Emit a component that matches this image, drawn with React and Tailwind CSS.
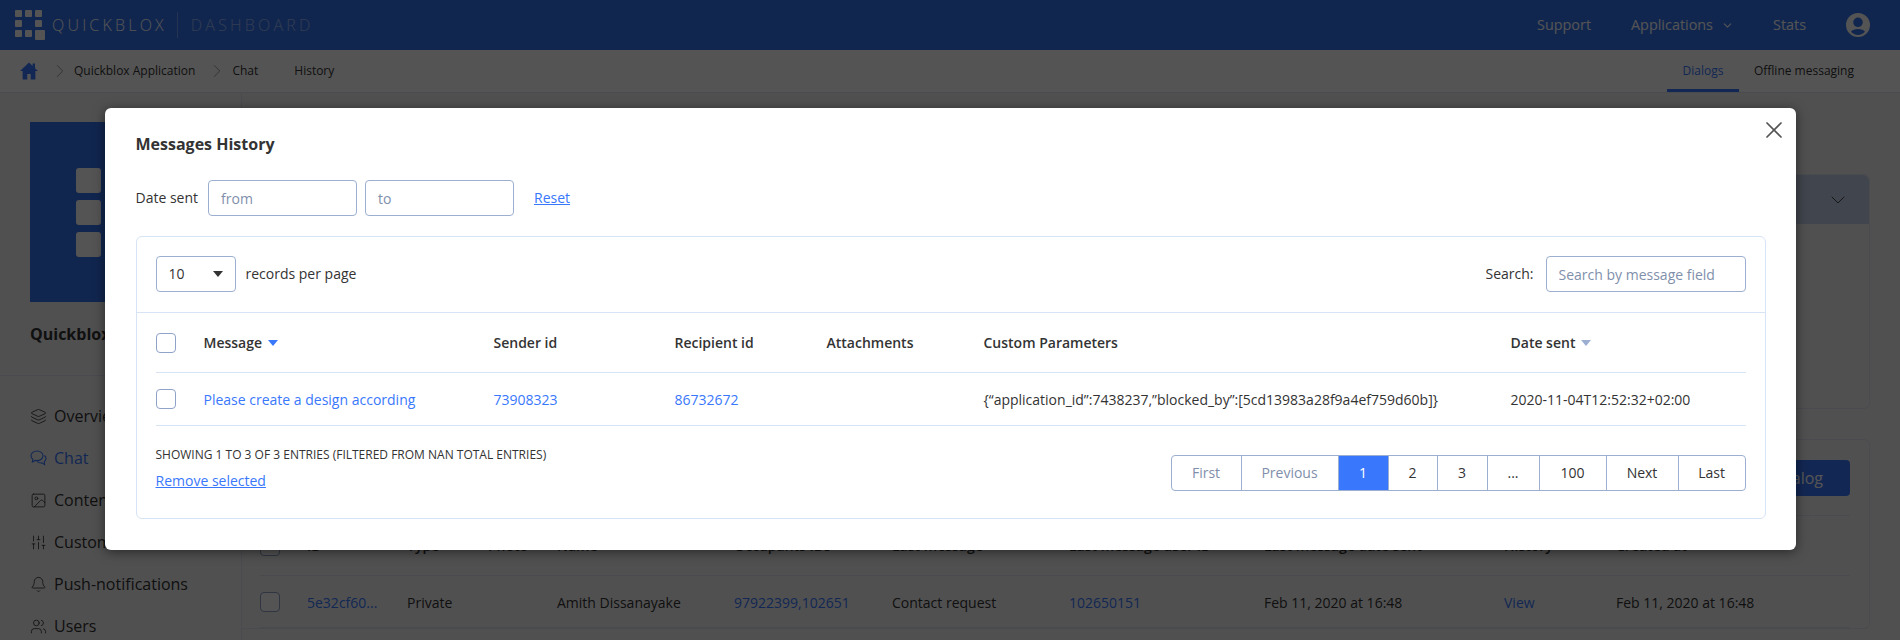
import React from 'react';
import { Layers, Image, SlidersVertical, Bell, Users, ChevronDown, ChevronRight, X } from 'lucide-react';

const SideItem = ({ icon, label, active }) => (
  <div className={`flex h-[42px] items-center gap-[7px] pl-[30px] text-base ${active ? 'text-[#3978fc]' : 'text-[#333333]'}`}>
    {icon}
    <span>{label}</span>
  </div>
);

const Caret = ({ className }) => (
  <svg width="10" height="6" viewBox="0 0 10 6" className={className}>
    <path d="M0 0h10L5 6z" fill="currentColor" />
  </svg>
);

const Checkbox = () => (
  <div className="h-5 w-5 rounded border border-[#8ea3c7] bg-white"></div>
);

const pages = [
  { label: 'First', w: 'w-[69px]', c: 'text-[#7f8fab]' },
  { label: 'Previous', w: 'w-[97px]', c: 'text-[#7f8fab]' },
  { label: '1', w: 'w-[50px]', c: 'bg-[#3978fc] text-white' },
  { label: '2', w: 'w-[49px]', c: 'text-[#333333]' },
  { label: '3', w: 'w-[50px]', c: 'text-[#333333]' },
  { label: '...', w: 'w-[52px]', c: 'text-[#333333]' },
  { label: '100', w: 'w-[67px]', c: 'text-[#333333]' },
  { label: 'Next', w: 'w-[72px]', c: 'text-[#333333]' },
  { label: 'Last', w: 'w-[67px]', c: 'text-[#333333]' },
];

const App = () => {
  return (
    <div className="relative h-[640px] w-full overflow-hidden bg-[#f2f3f4] font-['Open_Sans',sans-serif] text-sm text-[#333333]">
      {/* Header */}
      <header className="flex h-[50px] items-center justify-between bg-[#3474f0] pl-[15px] pr-[30px] text-white">
        <div className="flex items-center">
          <svg width="30" height="30" viewBox="0 0 30 30" className="text-white">
            <g fill="currentColor">
              <rect x="0" y="0" width="7" height="7" rx="1" />
              <rect x="10" y="0" width="7" height="7" rx="1" />
              <rect x="20" y="0" width="7" height="7" rx="1" />
              <rect x="0" y="10" width="7" height="7" rx="1" />
              <rect x="20" y="10" width="7" height="7" rx="1" />
              <rect x="0" y="20" width="7" height="7" rx="1" />
              <rect x="10" y="20" width="7" height="7" rx="1" />
              <rect x="20" y="20" width="10" height="10" rx="1" />
            </g>
          </svg>
          <span className="ml-[7px] text-base font-light tracking-[3.2px]">QUICKBLOX</span>
          <span className="ml-[10px] h-[26px] w-px bg-white/30"></span>
          <span className="ml-[13px] text-base font-light tracking-[3.2px] text-white/50">DASHBOARD</span>
        </div>
        <div className="flex items-center text-[14.4px]">
          <span>Support</span>
          <span className="ml-[40px]">Applications</span>
          <ChevronDown size={13} className="ml-[8px]" />
          <span className="ml-[39px]">Stats</span>
          <svg width="24" height="24" viewBox="0 0 24 24" className="ml-[40px]">
            <path fill="currentColor" fillRule="evenodd" d="M12 0a12 12 0 1 1 0 24a12 12 0 0 1 0-24zM12 4.500a4.800 4.800 0 1 0 0 9.600a4.800 4.800 0 0 0 0-9.600zM12 16c-3.200 0-5.800 1-7 2.800c1.700 2 4.200 3.200 7 3.200s5.300-1.200 7-3.200c-1.200-1.800-3.800-2.800-7-2.800z" />
          </svg>
        </div>
      </header>

      {/* Breadcrumbs */}
      <div className="flex h-[43px] items-center justify-between border-b border-[#dde2ec] bg-white pl-5 text-xs">
        <div className="flex items-center">
          <svg width="18" height="18" viewBox="0 0 18 18" className="text-[#3978fc]">
            <path fill="currentColor" d="M9 0.500L0 9h2.600v8.500h4.700v-5.500h3.400v5.500h4.700V9H18l-3-2.800V1.500h-2.400v2.400z" />
          </svg>
          <ChevronRight size={22} strokeWidth={0.8} className="ml-[11px] text-[#777777]" />
          <span className="ml-[3px]">Quickblox Application</span>
          <ChevronRight size={22} strokeWidth={0.8} className="ml-[11px] text-[#777777]" />
          <span className="ml-[4px]">Chat</span>
          <span className="ml-[36px]">History</span>
        </div>
        <div className="flex h-full items-center">
          <div className="flex h-full w-[72px] items-center justify-center border-b-[3px] border-[#3978fc] pt-[3px] text-[#3978fc]">Dialogs</div>
          <span className="ml-[15px] mr-[46px]">Offline messaging</span>
        </div>
      </div>

      {/* Page behind the modal */}
      <div className="flex">
        <aside className="w-[242px] shrink-0 border-r border-[#dde2ec]">
          <div className="ml-[30px] mt-[29px] flex h-[180px] w-[180px] flex-col gap-[7px] bg-[#3474f0] pl-[46px] pt-[46px]">
            <div className="h-[25px] w-[25px] rounded-[3px] bg-white"></div>
            <div className="h-[25px] w-[25px] rounded-[3px] bg-white"></div>
            <div className="h-[25px] w-[25px] rounded-[3px] bg-white"></div>
          </div>
          <div className="mt-5 pl-[30px] text-base font-bold">Quickblox Application</div>
          <div className="mt-[29px] border-t border-[#dde2ec]"></div>
          <nav className="mt-[19px]">
            <SideItem icon={<Layers size={17} strokeWidth={1.2} />} label="Overview" />
            <SideItem
              active
              icon={
                <svg width="17" height="17" viewBox="0 0 17 17" fill="none" stroke="currentColor" strokeWidth="1.100">
                  <path d="M7 1C3.700 1 1 3.100 1 5.800c0 1.400.7 2.600 1.800 3.500L2.400 12l2.800-1.600c.6.100 1.200.2 1.800.2 3.300 0 6-2.100 6-4.800S10.300 1 7 1z" />
                  <path d="M14.500 5.500c1 .8 1.500 1.800 1.500 3 0 1.300-.7 2.400-1.700 3.200l.3 2.900-2.700-1.700c-1.800.2-3.500-.3-4.600-1.300" />
                </svg>
              }
              label="Chat"
            />
            <SideItem icon={<Image size={17} strokeWidth={1.2} />} label="Content" />
            <SideItem icon={<SlidersVertical size={17} strokeWidth={1.2} />} label="Custom" />
            <SideItem icon={<Bell size={17} strokeWidth={1.2} />} label="Push-notifications" />
            <SideItem icon={<Users size={17} strokeWidth={1.2} />} label="Users" />
          </nav>
        </aside>

        <main className="flex-1 pr-[30px] pt-[81px]">
          <div className="h-[235px] rounded-r-md border border-l-0 border-[#dde2ec]">
            <div className="flex h-[49px] items-center justify-end rounded-tr-md bg-[#c6d0e8] pr-[19px]">
              <ChevronDown size={24} strokeWidth={0.9} />
            </div>
          </div>
          <div className="mt-[30px] rounded-r-md border border-l-0 border-[#dde2ec] pl-[18px] pr-[19px]">
            <div className="flex h-[76px] items-center justify-end border-b border-[#dde2ec]">
              <button className="h-9 rounded bg-[#3978fc] px-[27px] text-base text-white">New dialog</button>
            </div>
            <div className="grid h-[60px] grid-cols-[47px_100px_81px_69px_177px_158px_177px_195px_240px_112px_1fr] items-center border-b border-[#dde2ec] font-semibold">
              <Checkbox />
              <span>ID</span>
              <span>Type</span>
              <span>Photo</span>
              <span>Name</span>
              <span>Occupants IDs</span>
              <span>Last message</span>
              <span>Last message user ID</span>
              <span>Last message date sent</span>
              <span>History</span>
              <span>Created at</span>
            </div>
            <div className="grid h-[52px] grid-cols-[47px_100px_150px_177px_158px_177px_195px_240px_112px_1fr] items-center border-b border-[#dde2ec]">
              <Checkbox />
              <span className="mt-[2px] text-[#3978fc]">5e32cf60...</span>
              <span className="mt-[2px]">Private</span>
              <span className="mt-[2px]">Amith Dissanayake</span>
              <span className="mt-[2px] text-[#3978fc]">97922399,102651</span>
              <span className="mt-[2px]">Contact request</span>
              <span className="mt-[2px] text-[#3978fc]">102650151</span>
              <span className="mt-[2px]">Feb 11, 2020 at 16:48</span>
              <span className="mt-[2px] text-[#3978fc]">View</span>
              <span className="mt-[2px]">Feb 11, 2020 at 16:48</span>
            </div>
          </div>
        </main>
      </div>

      {/* Modal */}
      <div className="absolute inset-0 flex justify-center bg-black/[0.67] pt-[108px]">
        <div className="relative h-[442px] w-[1691px] rounded-md bg-white pl-[31px] pr-[30px] pt-6 shadow-[0_2px_12px_rgba(0,0,0,0.5)]">
          <button className="absolute right-[8px] top-[8px] text-[#555555]">
            <X size={28} strokeWidth={1.5} />
          </button>
          <h2 className="text-base font-bold leading-6">Messages History</h2>

          <div className="mt-6 flex items-center">
            <span>Date sent</span>
            <input
              placeholder="from"
              className="ml-[10px] h-9 w-[149px] rounded border border-[#9cafd0] px-3 placeholder:text-[#7f8fab]"
            />
            <input
              placeholder="to"
              className="ml-2 h-9 w-[149px] rounded border border-[#9cafd0] px-3 placeholder:text-[#7f8fab]"
            />
            <a className="ml-5 text-[#3978fc] underline">Reset</a>
          </div>

          <div className="mt-5 h-[283px] rounded-md border border-[#d6e4f5]">
            <div className="flex h-[76px] items-start justify-between border-b border-[#d6e4f5] px-[19px] pt-[19px]">
              <div className="flex items-center">
                <div className="flex h-9 w-20 items-center justify-between rounded border border-[#9cafd0] px-3">
                  <span>10</span>
                  <Caret className="text-[#333333]" />
                </div>
                <span className="ml-[10px]">records per page</span>
              </div>
              <div className="flex items-center">
                <span>Search:</span>
                <input
                  placeholder="Search by message field"
                  className="ml-3 h-9 w-[200px] rounded border border-[#9cafd0] px-3 placeholder:text-[#7f8fab]"
                />
              </div>
            </div>

            <div className="px-[19px]">
              <div className="grid h-[60px] grid-cols-[48px_290px_181px_152px_157px_527px_1fr] items-center border-b border-[#d6e4f5] font-semibold">
                <Checkbox />
                <div className="flex items-center gap-[6px]">
                  Message <Caret className="text-[#3978fc]" />
                </div>
                <span>Sender id</span>
                <span>Recipient id</span>
                <span>Attachments</span>
                <span>Custom Parameters</span>
                <div className="flex items-center gap-[6px]">
                  Date sent <Caret className="text-[#9cafd0]" />
                </div>
              </div>
              <div className="grid h-[53px] grid-cols-[48px_290px_181px_152px_157px_527px_1fr] items-center border-b border-[#d6e4f5]">
                <Checkbox />
                <span className="mt-[2px] text-[#3978fc]">Please create a design according</span>
                <span className="mt-[2px] text-[#3978fc]">73908323</span>
                <span className="mt-[2px] text-[#3978fc]">86732672</span>
                <span></span>
                <span className="mt-[2px]">{'{“application_id”:7438237,”blocked_by”:[5cd13983a28f9a4ef759d60b]}'}</span>
                <span className="mt-[2px]">2020-11-04T12:52:32+02:00</span>
              </div>

              <div className="flex items-start justify-between">
                <div className="pt-5">
                  <div className="text-xs leading-[18px]">SHOWING 1 TO 3 OF 3 ENTRIES (FILTERED FROM NAN TOTAL ENTRIES)</div>
                  <a className="mt-[7px] block leading-5 text-[#3978fc] underline">Remove selected</a>
                </div>
                <div className="mt-[29px] flex h-9 overflow-hidden rounded border border-[#9cafd0]">
                  {pages.map((p, i) => (
                    <div
                      key={p.label}
                      className={`flex items-center justify-center ${p.w} ${p.c} ${i > 0 ? 'border-l border-[#9cafd0]' : ''}`}
                    >
                      {p.label}
                    </div>
                  ))}
                </div>
              </div>
            </div>
          </div>
        </div>
      </div>
    </div>
  );
};

export default App;
